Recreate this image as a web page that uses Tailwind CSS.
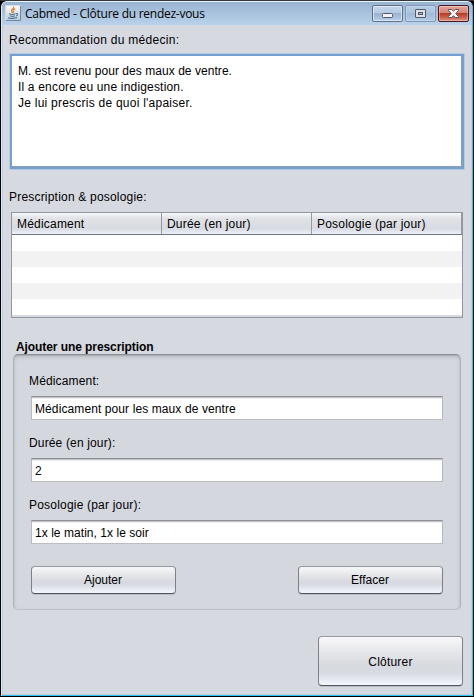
<!DOCTYPE html>
<html lang="fr">
<head>
<meta charset="utf-8">
<title>Cabmed - Clôture du rendez-vous</title>
<script src="https://cdn.jsdelivr.net/npm/@tailwindcss/browser@4"></script>
</head>
<body class="bg-black">
<div class="w-[474px] h-[697px] px-px bg-black border-t border-[#35363f] overflow-hidden font-['Liberation_Sans',Arial,sans-serif] text-[12px] leading-[16px] text-black">
  <main class="h-[695px] w-[472px] rounded-t-[6px] border border-t-[#eaf6fd] border-l-[#d8eefb] border-r-[#2ec4ed] border-b-[#2ec4ed] bg-[#d6d9e0] overflow-hidden flex flex-col">
    <header class="h-[23px] shrink-0 bg-linear-to-b from-[#99b4d1] to-[#b9d1ea] flex items-start pl-[3px] pr-[3px]">
      <svg class="mt-[3px] shrink-0" width="16" height="16" viewBox="0 0 16 16">
        <defs><linearGradient id="ic" x1="0" y1="0" x2="0" y2="1"><stop offset="0" stop-color="#fdfdfd"/><stop offset="1" stop-color="#bccad8"/></linearGradient></defs>
        <rect x=".5" y=".5" width="15" height="15" fill="url(#ic)" stroke="#d3dce5"/>
        <path d="M15.5 1v14.5H1" fill="none" stroke="#72889d"/>
        <path d="M8.6 1.5c1.2 2-3.2 2.8-2 5 .3.6.8 1 1 1.5M10.2 3.6C8 4.6 7.4 5.4 8.4 6.4c.5.6.1 1.2-.2 1.6" fill="none" stroke="#e5852d" stroke-width="1.2"/>
        <path d="M4 8.8c1.5.7 5 .6 6.5 0M4.8 10.7c1.5.6 4 .6 5.2 0M3 12.8c2 .9 7 .8 9-.2M11 8.7c2.2-.7 2.2 1.5.2 2.2" fill="none" stroke="#477195" stroke-width="1.1"/>
      </svg>
      <h1 class="ml-[4px] mt-[4px] font-['Open_Sans','Noto_Sans',sans-serif] text-[12px] leading-[16px] tracking-[-0.26px] whitespace-nowrap">Cabmed - Clôture du rendez-vous</h1>
      <div class="ml-auto mt-[3px] flex gap-[2px]">
        <button class="w-[31px] h-[17px] rounded-[2px] border border-[#5f6f8a] bg-[linear-gradient(#c3d6ea_0,#b5cbe2_45%,#98b3d0_50%,#b5d0ea_100%)] shadow-[inset_0_0_0_1px_#ffffff88] flex justify-center" aria-label="Réduire">
          <svg width="13" height="15" viewBox="0 0 13 15"><rect x="1.5" y="7.5" width="10" height="4" rx="1" fill="#f4f4f4" stroke="#555866"/></svg>
        </button>
        <button class="w-[31px] h-[17px] rounded-[2px] border border-[#8096b5] bg-[linear-gradient(#b4cbe3_0,#abc4de_45%,#9fbbd8_50%,#b1cce7_100%)] shadow-[inset_0_0_0_1px_#ffffff33] flex justify-center" aria-label="Agrandir">
          <svg width="13" height="15" viewBox="0 0 13 15"><rect x="1.5" y="3.5" width="10" height="8" rx=".5" fill="#dfe0e4" stroke="#555866"/><rect x="4.500" y="6.5" width="4" height="2" fill="#9cb6d3" stroke="#555866"/></svg>
        </button>
        <button class="w-[31px] h-[17px] rounded-[2px] border border-[#4a1420] bg-[linear-gradient(#e3a397_0,#d58273_45%,#b93d23_50%,#c9573f_70%,#dc9280_100%)] shadow-[inset_0_0_0_1px_#ffffff55] flex justify-center" aria-label="Fermer">
          <svg width="13" height="15" viewBox="0 0 13 15"><path d="M1.500 3.500h3.300l1.700 1.800 1.700-1.800h3.300v1L8.800 7.500l2.700 3v1H8.200L6.500 9.700l-1.700 1.800H1.500v-1l2.700-3-2.700-3z" fill="#f6f6f6" stroke="#565763"/></svg>
        </button>
      </div>
    </header>

    <div class="flex-1 flex flex-col pl-[7px] pr-[6px] border-x border-l-[#b9d1ea] border-r-[#c9cdd6] border-b border-b-[#c3cbd8]">
      <label class="mt-[7px] whitespace-nowrap h-[16px] tracking-[0.29px] -ml-px">Recommandation du médecin:</label>
      <div class="mt-[5px] -ml-px w-[456px] h-[117px] shrink-0 border border-[#b6cbe2] rounded-[1px]">
        <div class="h-full border-2 border-[#73a0cf] bg-white shadow-[inset_0_-1px_0_#8f9bb0,inset_-1px_0_0_#8f9bb0] pl-[6px] pt-[7px] whitespace-nowrap">
          <p class="tracking-[0.05px]">M. est revenu pour des maux de ventre.</p>
          <p class="tracking-[0.18px]">Il a encore eu une indigestion.</p>
          <p class="tracking-[0.24px]">Je lui prescris de quoi l'apaiser.</p>
        </div>
      </div>

      <label class="mt-[19px] h-[16px] whitespace-nowrap tracking-[0.2px] -ml-px">Prescription &amp; posologie:</label>
      <section class="mt-[7px] ml-px w-[452px] h-[106px] shrink-0 border border-[#9297a1] bg-[#d6d9df] flex flex-col">
        <div class="h-[22px] grid grid-cols-[150px_150px_150px] border-b border-[#6e7480] bg-[linear-gradient(#f6f7f9_0,#e2e3e6_25%,#d9dce2_65%,#d8dbe2_75%,#edf0f8_100%)] leading-[22px] tracking-[0.2px]">
          <span class="h-[21px] border-r border-[#969aa3] pl-[5px]">Médicament</span>
          <span class="h-[21px] border-r border-[#969aa3] pl-[5px]">Durée (en jour)</span>
          <span class="h-[21px] border-r border-[#969aa3] pl-[5px]">Posologie (par jour)</span>
        </div>
        <div class="h-[16px] bg-white"></div>
        <div class="h-[16px] bg-[#f2f2f2]"></div>
        <div class="h-[16px] bg-white"></div>
        <div class="h-[16px] bg-[#f2f2f2]"></div>
        <div class="h-[16px] bg-white"></div>
      </section>

      <h2 class="mt-[21px] ml-[6px] h-[15px] font-bold whitespace-nowrap tracking-[-0.08px]">Ajouter une prescription</h2>
      <section class="ml-[3px] w-[448px] h-[256px] shrink-0 rounded-[5px] border border-t-[#8c8f95] border-l-[#aeb1b7] border-r-[#aeb1b7] border-b-[#bcbfc5] bg-[#d4d7de] shadow-[inset_0_1px_1px_#a9acb2,inset_0_2px_4px_#b9bcc3] pl-[17px] pr-[17px] flex flex-col">
        <label class="mt-[18px] h-[16px] -ml-[2px] tracking-[0.15px]">Médicament:</label>
        <input class="mt-[7px] h-[24px] w-[412px] shrink-0 border border-t-[#8d8e93] border-x-[#b8bac0] border-b-[#bcbdc3] bg-white shadow-[inset_0_1px_0_#c5c6ca,inset_0_2px_0_#eeeff1] px-[3px] pt-[2px] tracking-[0.1px]" value="Médicament pour les maux de ventre">
        <label class="mt-[15px] h-[16px] -ml-[2px] tracking-[0.15px]">Durée (en jour):</label>
        <input class="mt-[7px] h-[24px] w-[412px] shrink-0 border border-t-[#8d8e93] border-x-[#b8bac0] border-b-[#bcbdc3] bg-white shadow-[inset_0_1px_0_#c5c6ca,inset_0_2px_0_#eeeff1] px-[3px] pt-[2px]" value="2">
        <label class="mt-[15px] h-[16px] -ml-[2px] tracking-[0.2px]">Posologie (par jour):</label>
        <input class="mt-[7px] h-[24px] w-[412px] shrink-0 border border-t-[#8d8e93] border-x-[#b8bac0] border-b-[#bcbdc3] bg-white shadow-[inset_0_1px_0_#c5c6ca,inset_0_2px_0_#eeeff1] px-[3px] pt-[2px] tracking-[0.05px]" value="1x le matin, 1x le soir">
        <div class="mt-[22px] w-[412px] flex justify-between">
          <button class="w-[145px] h-[28px] rounded-[4px] border border-t-[#969aa2] border-x-[#7c8087] border-b-[#50545b] bg-[linear-gradient(#f8f8fa_0,#e6e7ea_30%,#d6d9df_58%,#d8dbe2_68%,#f4f7fd_100%)] shadow-[0_1px_0_#bcbfc5] pr-px">Ajouter</button>
          <button class="w-[145px] h-[28px] rounded-[4px] border border-t-[#969aa2] border-x-[#7c8087] border-b-[#50545b] bg-[linear-gradient(#f8f8fa_0,#e6e7ea_30%,#d6d9df_58%,#d8dbe2_68%,#f4f7fd_100%)] shadow-[0_1px_0_#bcbfc5] pr-px">Effacer</button>
        </div>
      </section>
      <button class="mt-[26px] ml-[308px] w-[145px] h-[50px] shrink-0 rounded-[4px] border border-t-[#969aa2] border-x-[#7c8087] border-b-[#50545b] bg-[linear-gradient(#f8f8fa_0,#e6e7ea_30%,#d6d9df_60%,#d8dbe2_76%,#f4f7fd_100%)] shadow-[0_1px_0_#bcbfc5] tracking-[0.2px] pt-px">Clôturer</button>
    </div>
  </main>
</div>
</body>
</html>
